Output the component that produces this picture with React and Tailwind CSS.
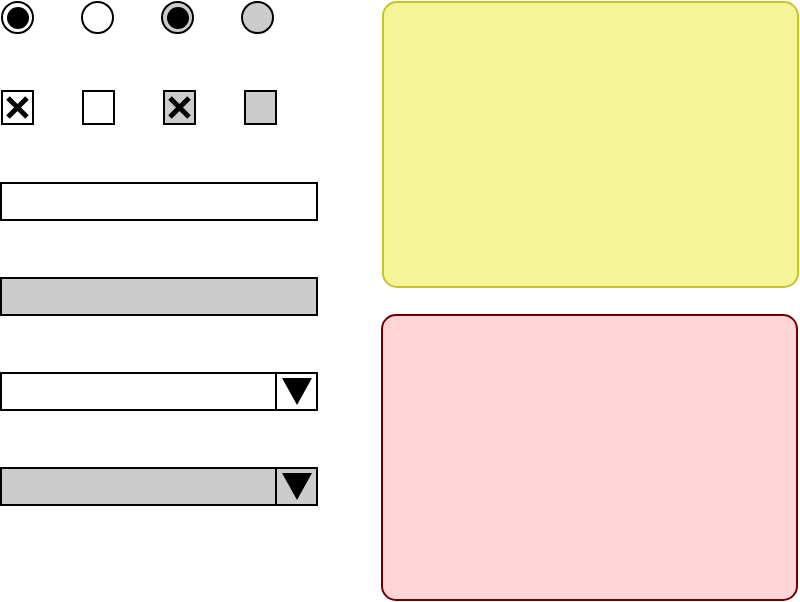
import React from "react";

const Radio = ({ grey, checked }) => (
  <div
    className={`w-[33px] h-[33px] rounded-full border-2 border-black flex items-center justify-center ${
      grey ? "bg-[#cccccc]" : "bg-white"
    }`}
  >
    {checked && <div className="w-[22px] h-[22px] rounded-full bg-black" />}
  </div>
);

const Checkbox = ({ grey, checked }) => (
  <div
    className={`w-[33px] h-[35px] border-2 border-black flex items-center justify-center ${
      grey ? "bg-[#cccccc]" : "bg-white"
    }`}
  >
    {checked && (
      <svg width="25" height="25" viewBox="0 0 25 25">
        <path d="M3 3 L22 22 M22 3 L3 22" stroke="black" strokeWidth="5" />
      </svg>
    )}
  </div>
);

const Input = ({ grey, dropdown }) => (
  <div
    className={`w-[318px] h-[39px] border-2 border-black flex justify-end ${
      grey ? "bg-[#cccccc]" : "bg-white"
    }`}
  >
    {dropdown && (
      <div className="w-[41px] h-full border-l-2 border-black flex items-center justify-center">
        <svg width="30" height="27" viewBox="0 0 30 27">
          <polygon points="0,0 30,0 15,27" fill="black" />
        </svg>
      </div>
    )}
  </div>
);

export default function App() {
  return (
    <div className="w-[800px] h-[602px] bg-white flex overflow-hidden">
      <div className="w-[318px] flex flex-col">
        <div className="flex gap-[47px] pl-[1px] pt-[1px]">
          <Radio checked />
          <Radio />
          <Radio grey checked />
          <Radio grey />
        </div>
        <div className="flex gap-[48px] pl-[1px] mt-[56px]">
          <Checkbox checked />
          <Checkbox />
          <Checkbox grey checked />
          <Checkbox grey />
        </div>
        <div className="mt-[57px] flex flex-col gap-[56px]">
          <Input />
          <Input grey />
          <Input dropdown />
          <Input grey dropdown />
        </div>
      </div>
      <div className="ml-[64px] w-[417px] flex flex-col pt-[1px] gap-[26px]">
        <div className="h-[287px] rounded-[15px] border-2 border-[#c4c42c] bg-[#f5f598]" />
        <div className="h-[287px] w-[417px] -ml-[1px] rounded-[15px] border-2 border-[#6f0000] bg-[#ffd4d6]" />
      </div>
    </div>
  );
}
